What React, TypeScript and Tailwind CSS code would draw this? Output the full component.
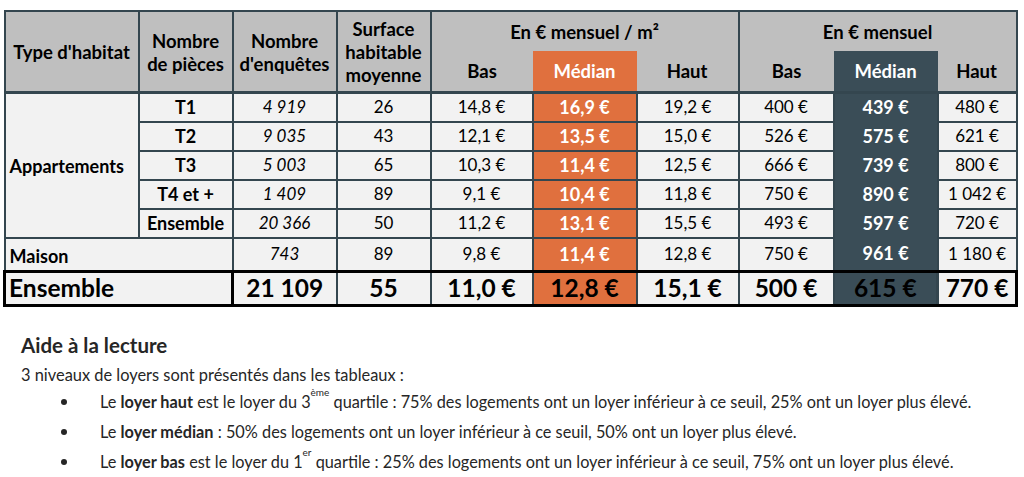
import React from "react";

const slate = "border-[#34464f]";

type Row = {
  p: string;
  n: string;
  s: string;
  b: string;
  m: string;
  h: string;
  eb: string;
  em: string;
  eh: string;
};

const appart: Row[] = [
  { p: "T1", n: "4 919", s: "26", b: "14,8 €", m: "16,9 €", h: "19,2 €", eb: "400 €", em: "439 €", eh: "480 €" },
  { p: "T2", n: "9 035", s: "43", b: "12,1 €", m: "13,5 €", h: "15,0 €", eb: "526 €", em: "575 €", eh: "621 €" },
  { p: "T3", n: "5 003", s: "65", b: "10,3 €", m: "11,4 €", h: "12,5 €", eb: "666 €", em: "739 €", eh: "800 €" },
  { p: "T4 et +", n: "1 409", s: "89", b: "9,1 €", m: "10,4 €", h: "11,8 €", eb: "750 €", em: "890 €", eh: "1 042 €" },
  { p: "Ensemble", n: "20 366", s: "50", b: "11,2 €", m: "13,1 €", h: "15,5 €", eb: "493 €", em: "597 €", eh: "720 €" },
];

const td = `border-2 ${slate} bg-[#f2f2f2] text-center p-0`;
const tdOrange = `border-2 ${slate} bg-[#e0703e] text-center text-white font-bold text-[18px] p-0`;
const tdDark = `border-x-2 border-y-0 ${slate} bg-[#3a4d57] text-center text-white font-bold text-[18px] p-0`;
const th = `border-2 ${slate} bg-[#bfbfbf] text-center font-bold p-0 leading-[23px] pt-[3px]`;

function DataCells({ r }: { r: Row }) {
  return (
    <>
      <td className={`${td} italic`}>{r.n}</td>
      <td className={td}>{r.s}</td>
      <td className={td}>{r.b}</td>
      <td className={tdOrange}>{r.m}</td>
      <td className={td}>{r.h}</td>
      <td className={td}>{r.eb}</td>
      <td className={tdDark}>{r.em}</td>
      <td className={td}>{r.eh}</td>
    </>
  );
}

export default function App() {
  return (
    <div
      className="w-[1024px] h-[477px] bg-white text-black overflow-hidden"
      style={{ fontFamily: "Lato, 'Open Sans', sans-serif" }}
    >
      <div className="pt-[10px] pl-[3px]">
        <table className="table-fixed border-collapse w-[1012px] text-[17px]">
          <colgroup>
            <col className="w-[134px]" />
            <col className="w-[94px]" />
            <col className="w-[104px]" />
            <col className="w-[94px]" />
            <col className="w-[102px]" />
            <col className="w-[104px]" />
            <col className="w-[102px]" />
            <col className="w-[95px]" />
            <col className="w-[104px]" />
            <col className="w-[79px]" />
          </colgroup>
          <thead className="text-[18.5px]">
            <tr className="h-[40px]">
              <th rowSpan={2} className={`${th} border-b-[3px]`}>Type d'habitat</th>
              <th rowSpan={2} className={`${th} border-b-[3px]`}>
                Nombre
                <br />
                de pièces
              </th>
              <th rowSpan={2} className={`${th} border-b-[3px]`}>
                Nombre
                <br />
                d'enquêtes
              </th>
              <th rowSpan={2} className={`${th} border-b-[3px]`}>
                Surface
                <br />
                habitable
                <br />
                moyenne
              </th>
              <th colSpan={3} className={`border-2 border-b-0 ${slate} bg-[#bfbfbf] text-center font-bold p-0 pt-[2px]`}>
                En € mensuel / m²
              </th>
              <th colSpan={3} className={`border-2 border-b-0 ${slate} bg-[#bfbfbf] text-center font-bold p-0 pt-[2px]`}>
                En € mensuel
              </th>
            </tr>
            <tr className="h-[41px]">
              <th className={`border-l-2 border-b-[3px] ${slate} bg-[#bfbfbf] text-center font-bold p-0 pt-[2px]`}>Bas</th>
              <th className={`border-b-[3px] ${slate} bg-[#e0703e] text-white text-center font-bold p-0 pt-[2px]`}>Médian</th>
              <th className={`border-r-2 border-b-[3px] ${slate} bg-[#bfbfbf] text-center font-bold p-0 pt-[2px]`}>Haut</th>
              <th className={`border-l-2 border-b-[3px] ${slate} bg-[#bfbfbf] text-center font-bold p-0 pt-[2px]`}>Bas</th>
              <th className={`border-b-[3px] ${slate} bg-[#3a4d57] text-white text-center font-bold p-0 pt-[2px]`}>Médian</th>
              <th className={`border-r-2 border-b-[3px] ${slate} bg-[#bfbfbf] text-center font-bold p-0 pt-[2px]`}>Haut</th>
            </tr>
          </thead>
          <tbody>
            {appart.map((r, i) => (
              <tr key={r.p} className="h-[29px]">
                {i === 0 && (
                  <td rowSpan={5} className={`border-2 ${slate} bg-[#f2f2f2] text-left font-bold text-[18px] pl-[4px] pt-[2px]`}>
                    Appartements
                  </td>
                )}
                <td className={`${td} font-bold text-[18px]`}>{r.p}</td>
                <DataCells r={r} />
              </tr>
            ))}
            <tr className="h-[29px]">
              <td colSpan={2} className={`border-2 ${slate} bg-[#f2f2f2] text-left font-bold text-[18px] pl-[4px] pt-[4px]`}>
                Maison
              </td>
              <DataCells
                r={{ p: "", n: "743", s: "89", b: "9,8 €", m: "11,4 €", h: "12,8 €", eb: "750 €", em: "961 €", eh: "1 180 €" }}
              />
            </tr>
            <tr className="h-[34px] text-[24.5px] leading-[28px] font-bold">
              <td colSpan={2} className="border-[3px] border-black bg-[#f2f2f2] text-left pl-[3px] p-0">
                Ensemble
              </td>
              <td className={`border-2 border-y-[3px] ${slate} border-y-black bg-[#f2f2f2] text-center p-0`}>21 109</td>
              <td className={`border-2 border-y-[3px] ${slate} border-y-black bg-[#f2f2f2] text-center p-0`}>55</td>
              <td className={`border-2 border-y-[3px] ${slate} border-y-black bg-[#f2f2f2] text-center p-0`}>11,0 €</td>
              <td className={`border-2 border-y-[3px] ${slate} border-y-black bg-[#e0703e] text-center p-0`}>12,8 €</td>
              <td className={`border-2 border-y-[3px] ${slate} border-y-black bg-[#f2f2f2] text-center p-0`}>15,1 €</td>
              <td className={`border-2 border-y-[3px] ${slate} border-y-black bg-[#f2f2f2] text-center p-0`}>500 €</td>
              <td className={`border-2 border-y-[3px] ${slate} border-y-black bg-[#3a4d57] text-center p-0`}>615 €</td>
              <td className={`border-2 border-[3px] ${slate} border-y-black border-r-black bg-[#f2f2f2] text-center p-0`}>770 €</td>
            </tr>
          </tbody>
        </table>
      </div>

      <div className="pl-[21px] pt-[25px] text-[#262626]">
        <div className="text-[20.5px] font-bold leading-[26px]">Aide à la lecture</div>
        <div className="text-[16.4px] leading-[22px] mt-[6px]">3 niveaux de loyers sont présentés dans les tableaux :</div>
        <ul className="mt-[1px] text-[16.3px] leading-[30px]">
          {[
            <>
              Le <b>loyer haut</b> est le loyer du 3<sup className="text-[10px] align-[7px]">ème</sup> quartile : 75% des logements ont un loyer inférieur à ce seuil, 25% ont un loyer plus élevé.
            </>,
            <>
              Le <b>loyer médian</b> : 50% des logements ont un loyer inférieur à ce seuil, 50% ont un loyer plus élevé.
            </>,
            <>
              Le <b>loyer bas</b> est le loyer du 1<sup className="text-[10px] align-[7px]">er</sup> quartile : 25% des logements ont un loyer inférieur à ce seuil, 75% ont un loyer plus élevé.
            </>,
          ].map((c, i) => (
            <li key={i} className="flex items-center">
              <span className="w-[6px] h-[6px] rounded-full bg-[#262626] ml-[40px] mr-[33px] shrink-0" />
              <span className="whitespace-nowrap">{c}</span>
            </li>
          ))}
        </ul>
      </div>
    </div>
  );
}
